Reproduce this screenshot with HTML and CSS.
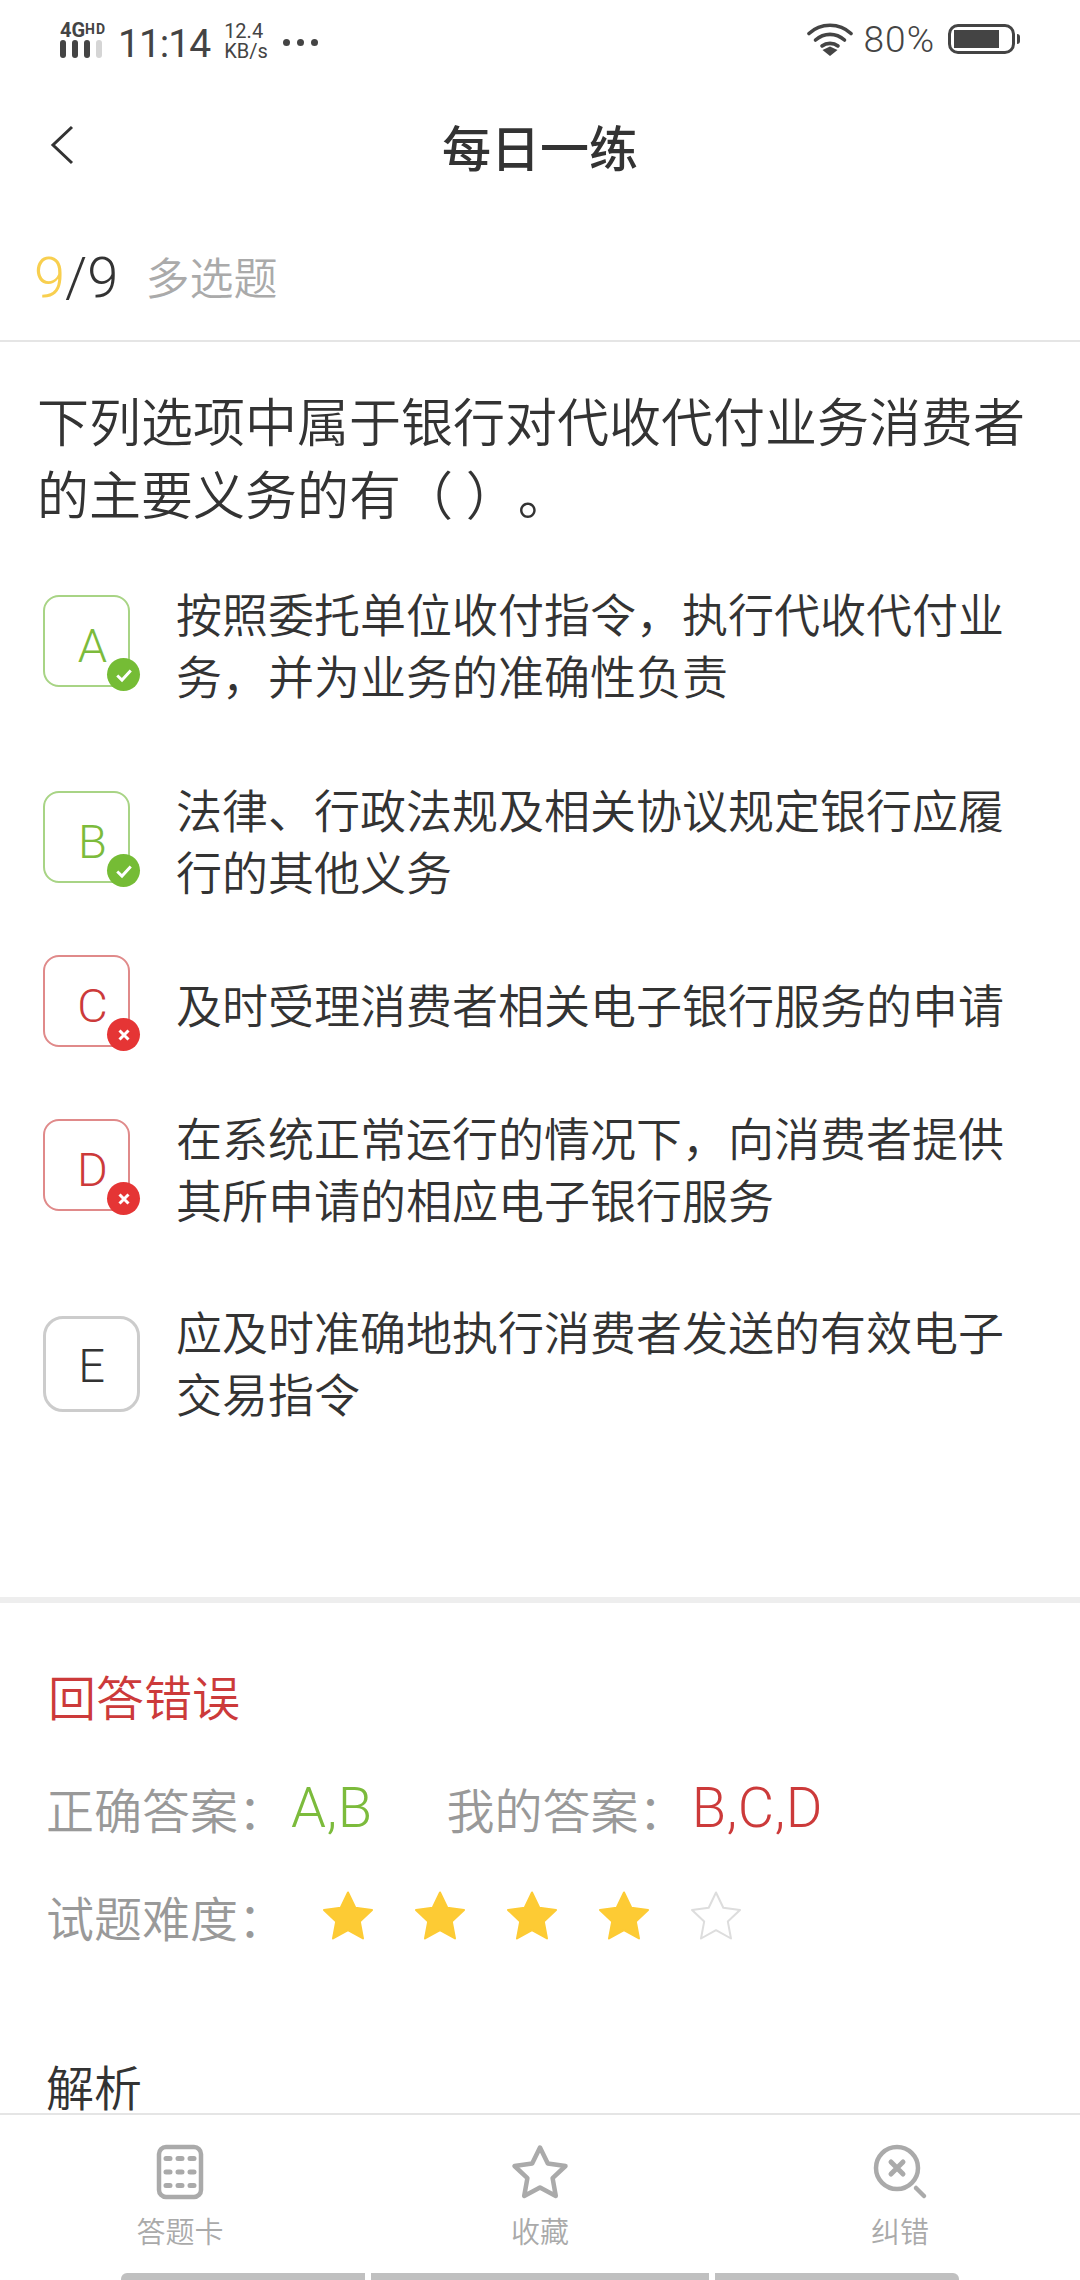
FILE: index.html
```html
<!DOCTYPE html>
<html lang="zh-CN">

<head>
  <meta charset="UTF-8" />
  <meta name="viewport" content="width=device-width, initial-scale=1.0" />
  <title>每日一练</title>
  <link rel="stylesheet" href="styles.css">
</head>

<body>
  <div class="status-bar">
    <div class="signal">
      <div class="signal-type">4G<small>HD</small></div>
      <div class="signal-bars"><i></i><i></i><i></i><i class="off"></i></div>
    </div>
    <div class="clock">11:14</div>
    <div class="speed">12.4<br />KB/s</div>
    <div class="dots"><i></i><i></i><i></i></div>
    <div class="status-right">
      <svg class="wifi" width="46" height="34" viewBox="0 0 46 34">
        <path d="M2 11.5C13.5 0.5 32.5 0.5 44 11.5" fill="none" stroke="#444" stroke-width="3.6" stroke-linecap="round" />
        <path d="M8.5 18C17 10.5 29 10.5 37.5 18" fill="none" stroke="#444" stroke-width="3.6" stroke-linecap="round" />
        <path d="M15 24C19.5 20.5 26.5 20.5 31 24" fill="none" stroke="#444" stroke-width="3.6" stroke-linecap="round" />
        <path d="M15.5 28L23 24.5L30.5 28L23 34Z" fill="#444" />
      </svg>
      <span class="percent">80%</span>
      <div class="battery"><div class="battery-level"></div></div>
      <div class="battery-cap"></div>
    </div>
  </div>

  <div class="nav-bar">
    <svg class="back" width="24" height="40" viewBox="0 0 24 40">
      <path d="M22 2L3 20L22 38" fill="none" stroke="#333" stroke-width="3" />
    </svg>
    <h1>每日一练</h1>
  </div>

  <div class="main">
    <div class="progress">
      <span class="progress-num"><em>9</em>/9</span>
      <span class="progress-type">多选题</span>
    </div>

    <div class="question">下列选项中属于银行对代收代付业务消费者的主要义务的有（ ）。</div>

    <div class="options">
      <div class="option right">
        <div class="option-key">A
          <span class="badge"><svg width="18" height="18" viewBox="0 0 16 16"><path d="M2 8.5L6.2 12.5L14 4" fill="none" stroke="#fff" stroke-width="2.6" /></svg></span>
        </div>
        <div class="option-text">按照委托单位收付指令，执行代收代付业务，并为业务的准确性负责</div>
      </div>
      <div class="option right">
        <div class="option-key">B
          <span class="badge"><svg width="18" height="18" viewBox="0 0 16 16"><path d="M2 8.5L6.2 12.5L14 4" fill="none" stroke="#fff" stroke-width="2.6" /></svg></span>
        </div>
        <div class="option-text">法律、行政法规及相关协议规定银行应履行的其他义务</div>
      </div>
      <div class="option wrong single">
        <div class="option-key">C
          <span class="badge"><svg width="14" height="14" viewBox="0 0 14 14"><path d="M2.5 2.5L11.5 11.5M11.5 2.5L2.5 11.5" fill="none" stroke="#fff" stroke-width="3" /></svg></span>
        </div>
        <div class="option-text">及时受理消费者相关电子银行服务的申请</div>
      </div>
      <div class="option wrong">
        <div class="option-key">D
          <span class="badge"><svg width="14" height="14" viewBox="0 0 14 14"><path d="M2.5 2.5L11.5 11.5M11.5 2.5L2.5 11.5" fill="none" stroke="#fff" stroke-width="3" /></svg></span>
        </div>
        <div class="option-text">在系统正常运行的情况下，向消费者提供其所申请的相应电子银行服务</div>
      </div>
      <div class="option plain">
        <div class="option-key">E</div>
        <div class="option-text">应及时准确地执行消费者发送的有效电子交易指令</div>
      </div>
    </div>

    <div class="answer">
      <div class="answer-state">回答错误</div>
      <div class="answer-row">
        <span class="answer-label">正确答案：</span>
        <span class="answer-value green">A,B</span>
        <span class="answer-label mine">我的答案：</span>
        <span class="answer-value red">B,C,D</span>
      </div>
      <div class="answer-row level">
        <span class="answer-label">试题难度：</span>
        <div class="stars">
          <svg width="52" height="50" viewBox="0 0 52 50"><path class="star-on" d="M26 1.5L33.3 16.8L50 19L37.8 30.4L41 47.5L26 39.2L11 47.5L14.2 30.4L2 19L18.7 16.8Z" /></svg>
          <svg width="52" height="50" viewBox="0 0 52 50"><path class="star-on" d="M26 1.5L33.3 16.8L50 19L37.8 30.4L41 47.5L26 39.2L11 47.5L14.2 30.4L2 19L18.7 16.8Z" /></svg>
          <svg width="52" height="50" viewBox="0 0 52 50"><path class="star-on" d="M26 1.5L33.3 16.8L50 19L37.8 30.4L41 47.5L26 39.2L11 47.5L14.2 30.4L2 19L18.7 16.8Z" /></svg>
          <svg width="52" height="50" viewBox="0 0 52 50"><path class="star-on" d="M26 1.5L33.3 16.8L50 19L37.8 30.4L41 47.5L26 39.2L11 47.5L14.2 30.4L2 19L18.7 16.8Z" /></svg>
          <svg width="52" height="50" viewBox="0 0 52 50"><path class="star-off" d="M26 1.5L33.3 16.8L50 19L37.8 30.4L41 47.5L26 39.2L11 47.5L14.2 30.4L2 19L18.7 16.8Z" /></svg>
        </div>
      </div>
    </div>

    <div class="analysis">解析</div>
  </div>

  <div class="tab-bar">
    <div class="tab">
      <svg width="48" height="56" viewBox="0 0 48 56">
        <rect x="3" y="3" width="42" height="50" rx="7" fill="none" stroke="#aaa" stroke-width="4.5" />
        <path d="M10 14.5H14M22 14.5H26M34 14.5H38M10 28H14M22 28H26M34 28H38M10 41.5H14M22 41.5H26M34 41.5H38" fill="none" stroke="#aaa" stroke-width="5" stroke-linecap="round" />
      </svg>
      <span>答题卡</span>
    </div>
    <div class="tab">
      <svg width="58" height="56" viewBox="0 0 58 56">
        <path d="M29 3.5L36.8 19.6L54.5 22L41.6 34.2L44.8 52L29 43.4L13.2 52L16.4 34.2L3.5 22L21.2 19.6Z" fill="none" stroke="#aaa" stroke-width="4.5" stroke-linejoin="round" />
      </svg>
      <span>收藏</span>
    </div>
    <div class="tab">
      <svg width="56" height="56" viewBox="0 0 56 56">
        <circle cx="25" cy="24" r="21" fill="none" stroke="#aaa" stroke-width="4.5" />
        <path d="M19 18L31 30M31 18L19 30" fill="none" stroke="#aaa" stroke-width="5" stroke-linecap="round" />
        <path d="M44 44L52 52" fill="none" stroke="#aaa" stroke-width="4.5" stroke-linecap="round" />
      </svg>
      <span>纠错</span>
    </div>
  </div>

  <div class="home-bars"><i></i><i></i><i></i></div>
</body>

</html>
```

FILE: styles.css
```css
* {
  box-sizing: border-box;
}

html,
body {
  margin: 0;
  padding: 0;
  height: 2280px;
  overflow: hidden;
}

body {
  display: flex;
  flex-direction: column;
  background-color: #fff;
  font-family: 'Roboto', 'Noto Sans CJK SC', sans-serif;
  color: #333;
}

/* status bar */
.status-bar {
  flex: none;
  display: flex;
  align-items: flex-start;
  height: 76px;
  padding: 22px 60px 0 60px;
  color: #444;
}

.signal {
  width: 42px;
  flex: none;
}

.signal-type {
  font-size: 20px;
  line-height: 15px;
  font-weight: 700;
  white-space: nowrap;
}

.signal-type small {
  font-size: 14px;
  letter-spacing: 1px;
  vertical-align: 3px;
}

.signal-bars {
  display: flex;
  gap: 6px;
  margin-top: 2px;
  align-items: flex-end;
}

.signal-bars i {
  width: 6px;
  height: 18px;
  border-radius: 3px;
  background-color: #444;
}

.signal-bars .off {
  background-color: #d5d5d5;
}

.clock {
  margin-left: 16px;
  font-size: 39px;
  line-height: 44px;
  letter-spacing: -1px;
}

.speed {
  margin-left: 14px;
  margin-top: -1px;
  font-size: 20px;
  line-height: 20px;
}

.dots {
  display: flex;
  gap: 7px;
  margin-left: 15px;
  margin-top: 17px;
}

.dots i {
  width: 7px;
  height: 7px;
  border-radius: 50%;
  background-color: #444;
}

.status-right {
  display: flex;
  align-items: center;
  margin-left: auto;
  height: 34px;
}

.percent {
  margin-left: 11px;
  font-size: 37px;
  font-weight: 300;
  letter-spacing: 1px;
}

.battery {
  width: 67px;
  height: 30px;
  margin-left: 13px;
  padding: 3px;
  border: 3px solid #444;
  border-radius: 10px;
}

.battery-level {
  width: 45px;
  height: 18px;
  background-color: #444;
}

.battery-cap {
  width: 3px;
  height: 10px;
  margin-left: 2px;
  background-color: #444;
  border-radius: 0 3px 3px 0;
}

/* nav bar */
.nav-bar {
  flex: none;
  position: relative;
  height: 144px;
  padding-left: 50px;
  padding-bottom: 6px;
  display: flex;
  align-items: center;
}

.nav-bar h1 {
  position: absolute;
  left: 0;
  right: 0;
  margin: 0;
  text-align: center;
  font-size: 49px;
  font-weight: 500;
}

.main {
  flex: 1;
  min-height: 0;
}

/* progress line */
.progress {
  display: flex;
  align-items: center;
  height: 122px;
  padding-left: 34px;
  padding-bottom: 5px;
  border-bottom: 2px solid #e5e5e5;
}

.progress-num {
  font-size: 56px;
  font-weight: 300;
}

.progress-num em {
  font-style: normal;
  color: #f8cf4f;
}

.progress-type {
  margin-left: 27px;
  margin-bottom: 4px;
  font-size: 44px;
  font-weight: 350;
  color: #aaa;
}

.question {
  margin-top: 46px;
  padding: 0 37px;
  font-size: 52px;
  font-weight: 350;
  line-height: 73px;
  text-spacing-trim: space-all;
}

/* options */
.options {
  margin-top: 39px;
}

.option {
  display: flex;
  align-items: center;
  height: 136px;
  margin-bottom: 60px;
  padding-left: 43px;
}

.option.single {
  height: 72px;
}

.option-key {
  position: relative;
  flex: none;
  display: flex;
  align-items: center;
  justify-content: center;
  width: 87px;
  height: 92px;
  padding: 9px 0 0 12px;
  border: 2px solid #ccc;
  border-radius: 16px;
  font-size: 47px;
  font-weight: 300;
}

.option.plain .option-key {
  width: 97px;
  height: 96px;
  margin-top: 6px;
  padding: 3px 0 0 0;
  border-width: 3px;
  border-radius: 20px;
}

.right .option-key {
  border-color: #a8d485;
  color: #7cbb3c;
}

.wrong .option-key {
  border-color: #e08a8a;
  color: #cc3a3a;
}

.badge {
  position: absolute;
  right: -12px;
  bottom: -6px;
  width: 33px;
  height: 33px;
  border-radius: 50%;
  display: flex;
  align-items: center;
  justify-content: center;
}

.right .badge {
  background-color: #75bc35;
}

.wrong .badge {
  background-color: #e53535;
}

.option-text {
  margin-left: 46px;
  padding-top: 12px;
  width: 860px;
  font-size: 46px;
  font-weight: 350;
  line-height: 62px;
}

.option.plain .option-text {
  margin-left: 36px;
  padding-top: 8px;
}

/* answer block */
.answer {
  margin-top: 168px;
  padding: 65px 48px 0;
  border-top: 6px solid #eee;
}

.answer-state {
  font-size: 48px;
  font-weight: 350;
  line-height: 64px;
  color: #cc3a3a;
}

.answer-row {
  display: flex;
  align-items: center;
  margin-top: 44px;
  margin-left: -2px;
  height: 64px;
  font-size: 48px;
  font-weight: 350;
}

.answer-label {
  color: #999;
}

.answer-label.mine {
  margin-left: 74px;
}

.answer-value {
  margin-left: 5px;
  font-size: 56px;
  font-weight: 300;
  letter-spacing: 0.5px;
}

.green {
  color: #7cbb3c;
}

.red {
  color: #cc3a3a;
}

.stars {
  display: flex;
  gap: 40px;
  margin-left: 36px;
}

.star-on {
  fill: #fdcb34;
  stroke: #fdcb34;
  stroke-width: 2;
  stroke-linejoin: round;
}

.star-off {
  fill: none;
  stroke: #ddd;
  stroke-width: 2;
  stroke-linejoin: round;
}

.analysis {
  margin-top: 117px;
  padding-left: 46px;
  font-size: 48px;
  font-weight: 350;
  line-height: 50px;
}

/* tabs */
.tab-bar {
  flex: none;
  display: grid;
  grid-template-columns: repeat(3, 360px);
  height: 160px;
  padding-top: 29px;
  border-top: 2px solid #e5e5e5;
}

.tab {
  display: flex;
  flex-direction: column;
  align-items: center;
  gap: 13px;
}

.tab span {
  font-size: 29px;
  font-weight: 350;
  line-height: 40px;
  color: #aaa;
}

.home-bars {
  flex: none;
  display: flex;
  gap: 6px;
  height: 7px;
  padding-left: 121px;
}

.home-bars i {
  height: 7px;
  background-color: #c0c0c0;
}

.home-bars i:nth-child(1) {
  width: 244px;
  border-top-left-radius: 6px;
}

.home-bars i:nth-child(2) {
  width: 338px;
}

.home-bars i:nth-child(3) {
  width: 244px;
  border-top-right-radius: 6px;
}
```
